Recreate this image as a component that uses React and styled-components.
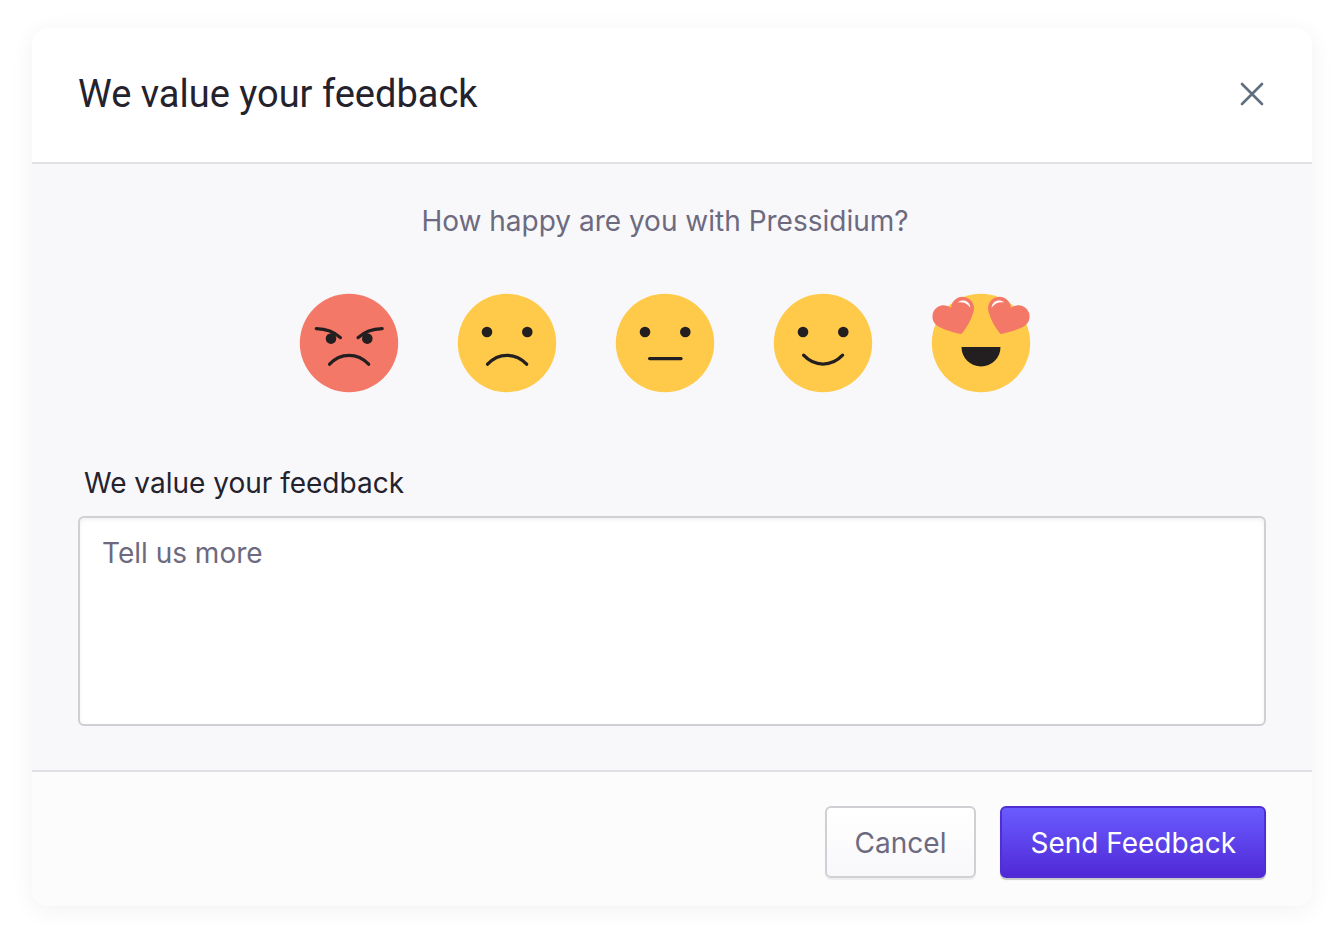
import React, { useState } from 'react';
import styled, { createGlobalStyle } from 'styled-components';

const GlobalStyle = createGlobalStyle`
  * {
    box-sizing: border-box;
  }

  body {
    margin: 0;
    background: #ffffff;
    font-family: Inter, "Liberation Sans", sans-serif;
    font-size: 28px;
    line-height: 38px;
    color: #24222d;
  }
`;

const Page = styled.main`
  padding: 28px 32px;
`;

const Modal = styled.form`
  border-radius: 16px;
  background: #ffffff;
  box-shadow: 0 4px 24px rgba(0, 0, 0, 0.06);
  overflow: hidden;
`;

const Header = styled.header`
  display: flex;
  align-items: center;
  justify-content: space-between;
  padding: 42px 46px 44px;
  border-bottom: 2px solid #e2e2e5;
`;

const Title = styled.h1`
  margin: 0;
  font-family: Roboto, Inter, sans-serif;
  font-size: 38px;
  line-height: 48px;
  font-weight: 400;
`;

const CloseButton = styled.button`
  display: flex;
  padding: 0;
  border: 0;
  background: none;
  color: #5f6f80;
  cursor: pointer;
`;

const Body = styled.div`
  padding: 38px 46px 44px;
  background: #f8f8fb;
`;

const Rating = styled.fieldset`
  display: flex;
  flex-direction: column;
  align-items: center;
  margin: 0;
  padding: 0 14px 0 0;
  border: 0;
`;

const Question = styled.legend`
  padding: 0;
  margin: 0 auto 54px;
  color: #6d6a80;
`;

const Faces = styled.div`
  display: flex;
  gap: 60px;
`;

const FaceOption = styled.label`
  display: flex;
  cursor: pointer;
`;

const HiddenRadio = styled.input`
  position: absolute;
  opacity: 0;
  pointer-events: none;
`;

const FaceSvg = styled.svg`
  width: 98px;
  height: 98px;
  overflow: visible;
`;

const FieldLabel = styled.label`
  display: block;
  margin: 72px 0 14px;
  padding-left: 6px;
`;

const TextArea = styled.textarea`
  display: block;
  width: 100%;
  height: 210px;
  padding: 16px 22px;
  border: 2px solid #cfcfd4;
  border-radius: 6px;
  background: #ffffff;
  box-shadow: inset 0 2px 4px rgba(0, 0, 0, 0.06);
  color: #24222d;
  font: inherit;
  resize: none;

  &::placeholder {
    color: #6d6a80;
    opacity: 1;
  }
`;

const Footer = styled.footer`
  display: flex;
  justify-content: flex-end;
  gap: 24px;
  padding: 34px 46px 28px;
  border-top: 2px solid #e2e2e5;
  background: #fcfcfc;
`;

const Button = styled.button`
  padding: 16px 28px 14px;
  border: 2px solid ${({ $primary }) => ($primary ? '#4f2ed6' : '#cfcfd4')};
  border-radius: 6px;
  background: ${({ $primary }) => ($primary
    ? 'linear-gradient(#6a5cff, #5029d6)'
    : 'linear-gradient(#ffffff, #f8f8fb)')};
  box-shadow: 0 2px 1px rgba(0, 0, 0, ${({ $primary }) => ($primary ? 0.2 : 0.06)});
  color: ${({ $primary }) => ($primary ? '#ffffff' : '#6d6a80')};
  font: inherit;
  cursor: pointer;
`;

const Eyes = () => (
  <g fill="#231f20">
    <circle cx="29" cy="38" r="5.3" />
    <circle cx="69.3" cy="38" r="5.3" />
  </g>
);

const Line = ({ d }) => (
  <path d={ d } fill="none" stroke="#231f20" strokeWidth="3.3" strokeLinecap="round" />
);

const FROWN = 'M29.6 70.2C40.5 58.4 57.5 58.4 68.6 70.2';

const Heart = () => (
  <g>
    <path
      fill="#f37868"
      d="M29.4 40C22 38.8 9.8 35 4.5 31.2A11.3 11.3 0 1 1 19 13.8A11.5 11.5 0 1 1 41 19C39 26 34.5 34 29.4 40Z"
    />
    <path fill="#ffffff" d="M25.6 8.4C31 4.8 37.5 6.6 38.4 13.8C35 9 31 7.6 25.6 8.4Z" />
  </g>
);

const faces = [
  {
    name: 'Very unhappy',
    color: '#f37868',
    drawing: (
      <>
        <g fill="#231f20">
          <circle cx="31" cy="44.6" r="5.3" />
          <circle cx="67.3" cy="44.6" r="5.3" />
        </g>
        <Line d="M16.3 34.6C25.5 34.8 34 37.6 40.4 43.6" />
        <Line d="M82.2 34.6C73 34.8 64.5 37.6 58.1 43.6" />
        <Line d={ FROWN } />
      </>
    ),
  },
  {
    name: 'Unhappy',
    color: '#ffc94a',
    drawing: <><Eyes /><Line d={ FROWN } /></>,
  },
  {
    name: 'Neutral',
    color: '#ffc94a',
    drawing: <><Eyes /><Line d="M33.6 64.6H65" /></>,
  },
  {
    name: 'Happy',
    color: '#ffc94a',
    drawing: <><Eyes /><Line d="M29.6 61.2C40.5 73 57.5 73 68.6 61.2" /></>,
  },
  {
    name: 'Very happy',
    color: '#ffc94a',
    drawing: (
      <>
        <Heart />
        <g transform="translate(98 0) scale(-1 1)"><Heart /></g>
        <path d="M29.5 53H68.5A19.5 19.5 0 0 1 29.5 53Z" fill="#231f20" />
      </>
    ),
  },
];

function App() {
  const [rating, setRating] = useState('');
  const [comment, setComment] = useState('');

  return (
    <Page>
      <GlobalStyle />
      <Modal onSubmit={ (e) => e.preventDefault() }>
        <Header>
          <Title>We value your feedback</Title>
          <CloseButton type="button" aria-label="Close">
            <svg width="28" height="28" viewBox="0 0 28 28" fill="none" aria-hidden="true">
              <path d="M4 4L24 24M24 4L4 24" stroke="currentColor" strokeWidth="2.6" strokeLinecap="round" />
            </svg>
          </CloseButton>
        </Header>
        <Body>
          <Rating>
            <Question>How happy are you with Pressidium?</Question>
            <Faces>
              { faces.map(({ name, color, drawing }) => (
                <FaceOption key={ name }>
                  <HiddenRadio
                    type="radio"
                    name="rating"
                    value={ name }
                    aria-label={ name }
                    checked={ rating === name }
                    onChange={ (e) => setRating(e.target.value) }
                  />
                  <FaceSvg viewBox="0 0 98 98" aria-hidden="true">
                    <circle cx="49" cy="49" r="49.2" fill={ color } />
                    { drawing }
                  </FaceSvg>
                </FaceOption>
              )) }
            </Faces>
          </Rating>
          <FieldLabel htmlFor="comment">We value your feedback</FieldLabel>
          <TextArea
            id="comment"
            placeholder="Tell us more"
            value={ comment }
            onChange={ (e) => setComment(e.target.value) }
          />
        </Body>
        <Footer>
          <Button type="button">Cancel</Button>
          <Button type="submit" $primary>Send Feedback</Button>
        </Footer>
      </Modal>
    </Page>
  );
}

export default App;
